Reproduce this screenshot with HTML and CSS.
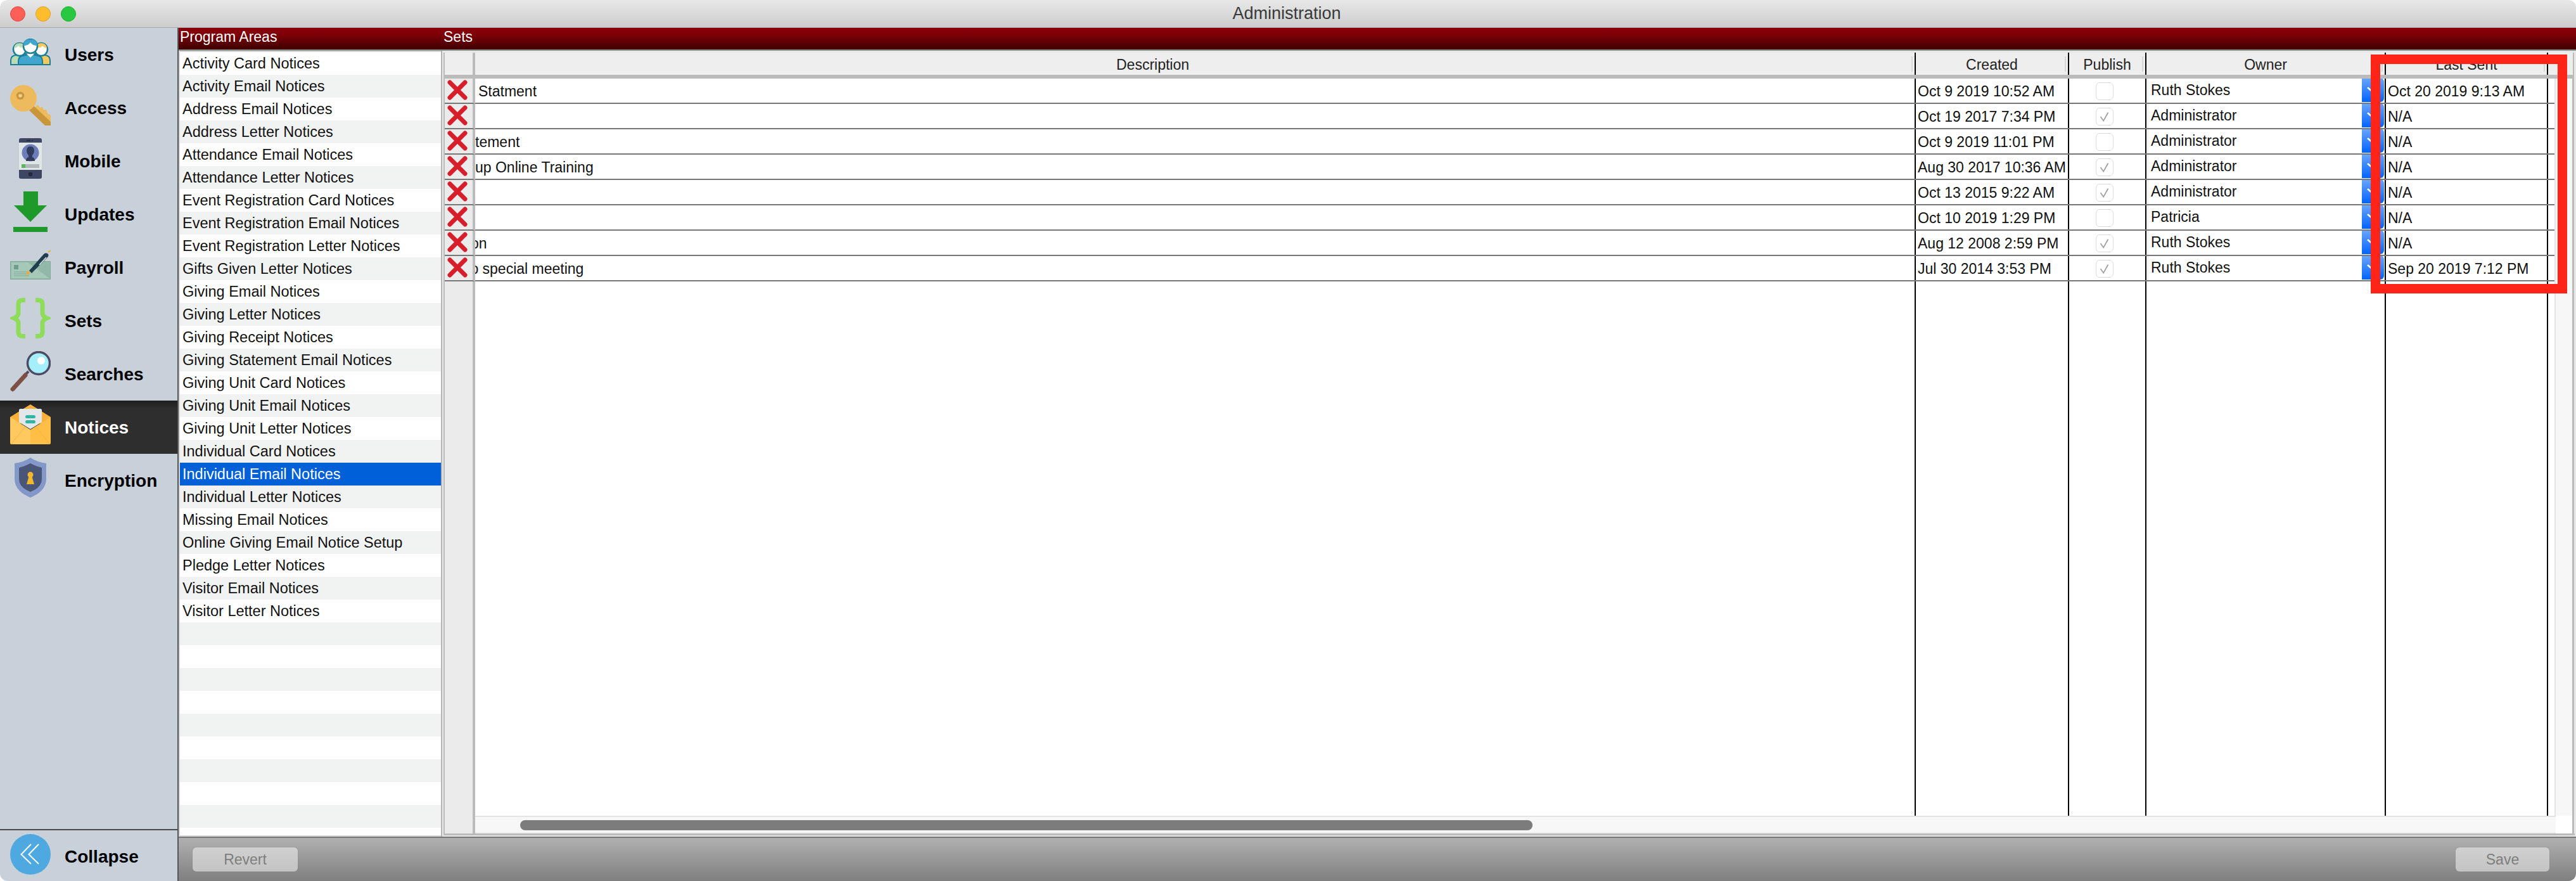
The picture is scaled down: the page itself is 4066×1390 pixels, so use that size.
FILE: index.html
```html
<!DOCTYPE html>
<html lang="en">
<head>
    <meta charset="UTF-8">
    <title>Administration</title>
    <link rel="stylesheet" href="styles.css">
</head>
<body>
    <div class="window">
        <div class="titlebar">
            <div class="lights">
                <span class="light red"></span>
                <span class="light yellow"></span>
                <span class="light green"></span>
            </div>
            <div class="title">Administration</div>
        </div>
        <div class="content">
            <div class="sidebar">
                <div class="nav">
                    <div class="nav-item">
                        <svg class="nav-icon" viewBox="0 0 64 64">
                            <path d="M1 52V45q0-7 8-8l7-2h18v17z" fill="#b9dcb4" stroke="#1a7f96" stroke-width="2"/>
                            <path d="M63 52V45q0-7-8-8l-7-2H30v17z" fill="#f6c95f" stroke="#1a7f96" stroke-width="2"/>
                            <circle cx="15" cy="28" r="10" fill="#fff" stroke="#1a7f96" stroke-width="2.5"/>
                            <path d="M6 26q1-8 9-8 7 0 9 7-9 1-11-3-2 3-7 4z" fill="#b9dcb4"/>
                            <circle cx="49" cy="28" r="10" fill="#fff" stroke="#1a7f96" stroke-width="2.5"/>
                            <path d="M58 26q-1-8-9-8-7 0-9 7 9 1 11-3 2 3 7 4z" fill="#f6c95f"/>
                            <path d="M13 52V46q0-7 7-8l12-3 12 3q7 1 7 8v6z" fill="#41a5d0" stroke="#1a7f96" stroke-width="2"/>
                            <path d="M26 35l6 6 6-6-6-3z" fill="#fff"/>
                            <circle cx="32" cy="23" r="11" fill="#fff" stroke="#1a7f96" stroke-width="2.5"/>
                            <path d="M21 22q0-10 11-10t11 10q-8 0-11-5-3 5-11 5z" fill="#41a5d0"/>
                        </svg>
                        <span class="nav-label">Users</span>
                    </div>
                    <div class="nav-item">
                        <svg class="nav-icon" viewBox="0 0 64 64">
                            <path d="M36 36l8-4 3 4 4-1 2 5 4-1 2 6 5 3v16H58z" fill="#edbb5e"/>
                            <path d="M30 40l7-7 27 25v6H55z" fill="#c9973a"/>
                            <path d="M41 31l3 1 3 4 4-1 2 5 4-1 2 6 5 3v10z" fill="#edbb5e"/>
                            <circle cx="21" cy="21" r="21" fill="#edbb5e"/>
                            <circle cx="16" cy="17" r="4.5" fill="#edd29a" stroke="#c9973a" stroke-width="3.5"/>
                        </svg>
                        <span class="nav-label">Access</span>
                    </div>
                    <div class="nav-item">
                        <svg class="nav-icon" viewBox="0 0 64 64">
                            <rect x="14" y="0" width="36" height="64" rx="3" fill="#3d4663"/>
                            <rect x="14" y="7" width="36" height="43" fill="#e0e6e8"/>
                            <rect x="26" y="3" width="6" height="1.5" fill="#22293d"/>
                            <circle cx="35" cy="3.8" r="1" fill="#22293d"/>
                            <circle cx="32" cy="23" r="13.5" fill="#6d7db8"/>
                            <path d="M25 36q0-5 4-6v-3q-3-3-3-7 0-7 6-7t6 7q0 4-3 7v3q4 1 4 6-3 0-7 0t-7 0z" fill="#2f3a5c"/>
                            <rect x="18" y="41" width="28" height="6" fill="#b0b8bc"/>
                            <rect x="18" y="41" width="6" height="6" fill="#5cb85c"/>
                            <circle cx="32" cy="57" r="3.2" fill="#22293d"/>
                        </svg>
                        <span class="nav-label">Mobile</span>
                    </div>
                    <div class="nav-item">
                        <svg class="nav-icon" viewBox="0 0 64 64">
                            <path d="M21 0h23v22h14L32 48 6 22h15z" fill="#1f9a2a"/>
                            <rect x="5" y="56" width="54" height="8" fill="#1f9a2a"/>
                        </svg>
                        <span class="nav-label">Updates</span>
                    </div>
                    <div class="nav-item">
                        <svg class="nav-icon" viewBox="0 0 64 64">
                            <rect x="0.5" y="26.5" width="63" height="28" fill="#92b9a8" stroke="#7fab98"/>
                            <path d="M2 28h26l34 25H2z" fill="#a6c8b7"/>
                            <rect x="6" y="32" width="7" height="7" fill="#6f9d8c"/>
                            <path d="M6 43h20M6 46h24M6 49h24" stroke="#7fab98" stroke-width="1.2"/>
                            <path d="M25 48l2-7 5 4z" fill="#f0a830"/>
                            <path d="M30 41L53 15q3-3 6-1t0 6L34 45z" fill="#1f3f4f"/>
                            <path d="M46 32l11-12" stroke="#dfe6e8" stroke-width="1.6"/>
                            <path d="M60 12l4-3" stroke="#f0a830" stroke-width="2"/>
                        </svg>
                        <span class="nav-label">Payroll</span>
                    </div>
                    <div class="nav-item">
                        <svg class="nav-icon" viewBox="0 0 64 64">
                            <path d="M24 3.5h-5q-6 0-6 7V24q0 5-7 8 7 3 7 8v13.5q0 7 6 7h5" fill="none" stroke="#8fdc5a" stroke-width="7"/>
                            <path d="M40 3.5h5q6 0 6 7V24q0 5 7 8-7 3-7 8v13.5q0 7-6 7h-5" fill="none" stroke="#8fdc5a" stroke-width="7"/>
                        </svg>
                        <span class="nav-label">Sets</span>
                    </div>
                    <div class="nav-item">
                        <svg class="nav-icon" viewBox="0 0 64 64">
                            <path d="M24 37l5-5" stroke="#4d4a62" stroke-width="4"/>
                            <path d="M4 60l20-22" stroke="#7d4f45" stroke-width="7" stroke-linecap="round"/>
                            <circle cx="45" cy="19" r="17.5" fill="#a5effb" stroke="#4d4a62" stroke-width="3.5"/>
                            <circle cx="49" cy="15" r="6" fill="#fff"/>
                        </svg>
                        <span class="nav-label">Searches</span>
                    </div>
                    <div class="nav-item active">
                        <svg class="nav-icon" viewBox="0 0 64 64">
                            <path d="M0 20L32 0l32 20v10H0z" fill="#fbb03b"/>
                            <path d="M14 9q0-2 2-2h32q2 0 2 2v19L32 39 14 28z" fill="#e4e7ea"/>
                            <rect x="24" y="17" width="16" height="5" rx="2.5" fill="#2fb5a4"/>
                            <rect x="24" y="25" width="16" height="5" rx="2.5" fill="#2fb5a4"/>
                            <path d="M0 20l32 20v23H2q-2 0-2-2z" fill="#ffc95f"/>
                            <path d="M64 20L32 40v23h30q2 0 2-2z" fill="#ffbe45"/>
                            <path d="M2 62l22-27M62 62L40 35" stroke="#fbb03b" stroke-width="1.5" opacity=".5"/>
                        </svg>
                        <span class="nav-label">Notices</span>
                    </div>
                    <div class="nav-item">
                        <svg class="nav-icon" viewBox="0 0 64 64">
                            <path d="M32 0q10 7 25 9v24q0 20-25 30Q7 53 7 33V9q15-2 25-9z" fill="#8497c9"/>
                            <path d="M32 9q9 5 18 7v18q0 13-18 20-18-7-18-20V16q9-2 18-7z" fill="#4a5678"/>
                            <circle cx="32" cy="27" r="4.5" fill="#f2b92c"/>
                            <path d="M30 28h4l4 14H26z" fill="#f2b92c"/>
                        </svg>
                        <span class="nav-label">Encryption</span>
                    </div>
                </div>
                <div class="collapse">
                    <svg class="collapse-icon" viewBox="0 0 64 64">
                        <circle cx="32" cy="32" r="32" fill="#4da9e0"/>
                        <path d="M33 16L17.500 32 33 47M45 16L29.500 32 45 47" fill="none" stroke="#fff" stroke-width="2"/>
                    </svg>
                    <span class="nav-label">Collapse</span>
                </div>
            </div>
            <div class="main">
                <div class="section-bar">
                    <div class="section-areas">Program Areas</div>
                    <div class="section-sets">Sets</div>
                </div>
                <div class="panels">
                    <ul class="area-list">
                        <li>Activity Card Notices</li>
                        <li>Activity Email Notices</li>
                        <li>Address Email Notices</li>
                        <li>Address Letter Notices</li>
                        <li>Attendance Email Notices</li>
                        <li>Attendance Letter Notices</li>
                        <li>Event Registration Card Notices</li>
                        <li>Event Registration Email Notices</li>
                        <li>Event Registration Letter Notices</li>
                        <li>Gifts Given Letter Notices</li>
                        <li>Giving Email Notices</li>
                        <li>Giving Letter Notices</li>
                        <li>Giving Receipt Notices</li>
                        <li>Giving Statement Email Notices</li>
                        <li>Giving Unit Card Notices</li>
                        <li>Giving Unit Email Notices</li>
                        <li>Giving Unit Letter Notices</li>
                        <li>Individual Card Notices</li>
                        <li class="selected">Individual Email Notices</li>
                        <li>Individual Letter Notices</li>
                        <li>Missing Email Notices</li>
                        <li>Online Giving Email Notice Setup</li>
                        <li>Pledge Letter Notices</li>
                        <li>Visitor Email Notices</li>
                        <li>Visitor Letter Notices</li>
                    </ul>
                    <div class="sets-panel">
                        <div class="table-head">
                            <div class="th"></div>
                            <div class="th th-desc"><span class="tick">Description</span></div>
                            <div class="th"><span class="tick">Created</span></div>
                            <div class="th"><span class="tick">Publish</span></div>
                            <div class="th"><span class="tick">Owner</span></div>
                            <div class="th"><span class="tick">Last Sent</span></div>
                            <div class="th th-end"></div>
                        </div>
                        <div class="table-body">
                            <div class="rows">
                                <div class="row">
                                    <div class="cell del"><svg class="x" viewBox="0 0 32 32"><path d="M4 4l24 24M28 4L4 28"/></svg></div>
                                    <div class="cell desc"><span class="d-first">Statment</span></div>
                                    <div class="cell date">Oct 9 2019 10:52 AM</div>
                                    <div class="cell pub"><span class="check"></span></div>
                                    <div class="cell owner"><span class="owner-name">Ruth Stokes</span><span class="arrow"><svg viewBox="0 0 35 38"><path d="M9 15l8 7 8-7"/></svg></span></div>
                                    <div class="cell date">Oct 20 2019 9:13 AM</div>
                                </div>
                                <div class="row">
                                    <div class="cell del"><svg class="x" viewBox="0 0 32 32"><path d="M4 4l24 24M28 4L4 28"/></svg></div>
                                    <div class="cell desc"></div>
                                    <div class="cell date">Oct 19 2017 7:34 PM</div>
                                    <div class="cell pub"><span class="check"><svg viewBox="0 0 28 28"><path d="M7 14l5 7 8-14"/></svg></span></div>
                                    <div class="cell owner"><span class="owner-name">Administrator</span><span class="arrow"><svg viewBox="0 0 35 38"><path d="M9 15l8 7 8-7"/></svg></span></div>
                                    <div class="cell date">N/A</div>
                                </div>
                                <div class="row">
                                    <div class="cell del"><svg class="x" viewBox="0 0 32 32"><path d="M4 4l24 24M28 4L4 28"/></svg></div>
                                    <div class="cell desc">tement</div>
                                    <div class="cell date">Oct 9 2019 11:01 PM</div>
                                    <div class="cell pub"><span class="check"></span></div>
                                    <div class="cell owner"><span class="owner-name">Administrator</span><span class="arrow"><svg viewBox="0 0 35 38"><path d="M9 15l8 7 8-7"/></svg></span></div>
                                    <div class="cell date">N/A</div>
                                </div>
                                <div class="row">
                                    <div class="cell del"><svg class="x" viewBox="0 0 32 32"><path d="M4 4l24 24M28 4L4 28"/></svg></div>
                                    <div class="cell desc">up Online Training</div>
                                    <div class="cell date">Aug 30 2017 10:36 AM</div>
                                    <div class="cell pub"><span class="check"><svg viewBox="0 0 28 28"><path d="M7 14l5 7 8-14"/></svg></span></div>
                                    <div class="cell owner"><span class="owner-name">Administrator</span><span class="arrow"><svg viewBox="0 0 35 38"><path d="M9 15l8 7 8-7"/></svg></span></div>
                                    <div class="cell date">N/A</div>
                                </div>
                                <div class="row">
                                    <div class="cell del"><svg class="x" viewBox="0 0 32 32"><path d="M4 4l24 24M28 4L4 28"/></svg></div>
                                    <div class="cell desc"></div>
                                    <div class="cell date">Oct 13 2015 9:22 AM</div>
                                    <div class="cell pub"><span class="check"><svg viewBox="0 0 28 28"><path d="M7 14l5 7 8-14"/></svg></span></div>
                                    <div class="cell owner"><span class="owner-name">Administrator</span><span class="arrow"><svg viewBox="0 0 35 38"><path d="M9 15l8 7 8-7"/></svg></span></div>
                                    <div class="cell date">N/A</div>
                                </div>
                                <div class="row">
                                    <div class="cell del"><svg class="x" viewBox="0 0 32 32"><path d="M4 4l24 24M28 4L4 28"/></svg></div>
                                    <div class="cell desc"></div>
                                    <div class="cell date">Oct 10 2019 1:29 PM</div>
                                    <div class="cell pub"><span class="check"></span></div>
                                    <div class="cell owner"><span class="owner-name">Patricia</span><span class="arrow"><svg viewBox="0 0 35 38"><path d="M9 15l8 7 8-7"/></svg></span></div>
                                    <div class="cell date">N/A</div>
                                </div>
                                <div class="row">
                                    <div class="cell del"><svg class="x" viewBox="0 0 32 32"><path d="M4 4l24 24M28 4L4 28"/></svg></div>
                                    <div class="cell desc"><span class="d-cut-on">on</span></div>
                                    <div class="cell date">Aug 12 2008 2:59 PM</div>
                                    <div class="cell pub"><span class="check"><svg viewBox="0 0 28 28"><path d="M7 14l5 7 8-14"/></svg></span></div>
                                    <div class="cell owner"><span class="owner-name">Ruth Stokes</span><span class="arrow"><svg viewBox="0 0 35 38"><path d="M9 15l8 7 8-7"/></svg></span></div>
                                    <div class="cell date">N/A</div>
                                </div>
                                <div class="row">
                                    <div class="cell del"><svg class="x" viewBox="0 0 32 32"><path d="M4 4l24 24M28 4L4 28"/></svg></div>
                                    <div class="cell desc"><span class="d-cut-to">to special meeting</span></div>
                                    <div class="cell date">Jul 30 2014 3:53 PM</div>
                                    <div class="cell pub"><span class="check"><svg viewBox="0 0 28 28"><path d="M7 14l5 7 8-14"/></svg></span></div>
                                    <div class="cell owner"><span class="owner-name">Ruth Stokes</span><span class="arrow"><svg viewBox="0 0 35 38"><path d="M9 15l8 7 8-7"/></svg></span></div>
                                    <div class="cell date">Sep 20 2019 7:12 PM</div>
                                </div>
                                <div class="row filler">
                                    <div class="cell del"></div>
                                    <div class="cell"></div>
                                    <div class="cell"></div>
                                    <div class="cell"></div>
                                    <div class="cell"></div>
                                    <div class="cell"></div>
                                </div>
                            </div>
                            <div class="vscroll"></div>
                        </div>
                        <div class="hscroll">
                            <div class="del-foot"></div>
                            <div class="htrack"><div class="hthumb"></div></div>
                            <div class="corner"></div>
                        </div>
                    </div>
                </div>
                <div class="footer-bar">
                    <button class="btn btn-revert">Revert</button>
                    <button class="btn btn-save">Save</button>
                </div>
            </div>
        </div>
        <div class="red-box"></div>
    </div>
</body>
</html>
```

FILE: styles.css
```css
* {
    box-sizing: border-box;
}
body {
    margin: 0;
    background-color: #fff;
    font-family: "Liberation Sans", Arial, sans-serif;
    font-size: 23px;
    color: #111;
}
.window {
    position: relative;
    width: 4066px;
    height: 1390px;
    display: flex;
    flex-direction: column;
    border-radius: 12px;
    overflow: hidden;
}
.titlebar {
    position: relative;
    height: 44px;
    flex: none;
    display: flex;
    align-items: center;
    justify-content: center;
    background: linear-gradient(#e8e8e8, #cdcdcd);
    border-bottom: 1px solid #a6a6a6;
}
.lights {
    position: absolute;
    left: 16px;
    top: 10px;
    display: flex;
    gap: 16px;
}
.light {
    width: 24px;
    height: 24px;
    border-radius: 50%;
}
.light.red {
    background-color: #ff5f57;
    border: 1px solid #e2463f;
}
.light.yellow {
    background-color: #ffbd2e;
    border: 1px solid #dfa023;
}
.light.green {
    background-color: #28c940;
    border: 1px solid #1dad2b;
}
.title {
    font-size: 27px;
    color: #3a3a3a;
    margin-right: 4px;
}
.content {
    flex: 1;
    display: flex;
    min-height: 0;
}

/* left nav */
.sidebar {
    width: 282px;
    flex: none;
    display: flex;
    flex-direction: column;
    background-color: #c8d0da;
    border-right: 2px solid #555;
}
.nav {
    flex: 1;
}
.nav-item {
    height: 84px;
    display: flex;
    align-items: center;
    padding-left: 16px;
    gap: 22px;
}
.nav-icon {
    width: 64px;
    height: 64px;
    flex: none;
    margin-bottom: 8px;
}
.nav-label {
    font-size: 28px;
    font-weight: bold;
    color: #000;
    padding-top: 2px;
}
.nav-item.active {
    background: linear-gradient(#1f1f1f, #2e2e2e 14px);
}
.nav-item.active .nav-label {
    color: #fff;
}
.collapse {
    height: 82px;
    display: flex;
    align-items: center;
    padding-left: 16px;
    gap: 22px;
    border-top: 2px solid #4a4a4a;
}
.collapse .nav-label {
    padding-top: 4px;
}
.collapse-icon {
    width: 64px;
    height: 64px;
    flex: none;
    margin-bottom: 4px;
}

/* main */
.main {
    flex: 1;
    display: flex;
    flex-direction: column;
    min-width: 0;
}
.section-bar {
    height: 36px;
    flex: none;
    display: flex;
    background: linear-gradient(#8c0008, #7a0006 35%, #3f0002);
    border-bottom: 2px solid #8a8a8a;
    color: #fff;
    line-height: 29px;
}
.section-areas {
    width: 418px;
    padding-left: 2px;
}
.panels {
    flex: 1;
    min-height: 0;
    display: flex;
    background-color: #d5d5d5;
    padding-left: 2px;
    border-bottom: 2px solid #777;
}
.area-list {
    width: 412px;
    flex: none;
    list-style: none;
    margin: 2px 0 2px 0;
    padding: 0;
    overflow: hidden;
    background: repeating-linear-gradient(#fff 0, #fff 36px, #f1f3f2 36px, #f1f3f2 72px);
}
.area-list li {
    height: 36px;
    line-height: 36px;
    padding-left: 4px;
    font-size: 23.5px;
    color: #111;
}
.area-list li.selected {
    background-color: #0060d8;
    color: #fff;
}

/* sets table */
.sets-panel {
    flex: 1;
    min-width: 0;
    display: flex;
    flex-direction: column;
    padding: 3px 2px 2px 2px;
    border-left: 2px solid #b5b5b5;
    background-color: #e8e8e8;
}
.table-head,
.row {
    display: grid;
    grid-template-columns: 48px 2274px 242px 122px 378px 256px 10px;
}
.table-head {
    height: 41px;
    flex: none;
    grid-template-columns: 48px 2274px 242px 122px 378px 256px 1fr;
    border-left: 2px solid #bbb;
    border-right: 2px solid #bbb;
    border-bottom: 6px solid #bbb;
    background-color: #eee;
    margin-right: 1px;
}
.th {
    position: relative;
    display: flex;
    align-items: center;
    justify-content: center;
    padding-top: 3px;
    border-right: 2px solid #000;
    color: #222;
    font-size: 23px;
}
.th:first-child {
    border-right: 4px solid #bbb;
}
.th-end {
    border-right: none;
}
.th-desc {
    justify-content: flex-start;
    padding-left: 1012px;
}
.tick::after {
    content: "";
    position: absolute;
    right: 3px;
    top: 6px;
    bottom: 5px;
    width: 2px;
    background-color: #d8d8d8;
}
.table-body {
    flex: 1;
    min-height: 0;
    display: flex;
}
.rows {
    width: 3332px;
    flex: none;
    display: flex;
    flex-direction: column;
    background-color: #fff;
    border-left: 2px solid #bbb;
    margin-left: 0;
}
.row {
    height: 40px;
    flex: none;
    border-bottom: 2px solid #777;
}
.row.filler {
    flex: 1;
    border-bottom: none;
}
.cell {
    display: flex;
    align-items: center;
    min-width: 0;
    overflow: hidden;
    white-space: nowrap;
    border-right: 2px solid #000;
}
.cell.del {
    align-items: flex-start;
    justify-content: center;
    padding: 2px 4px 0 0;
    margin-bottom: -2px;
    background-color: #ebebeb;
    border-right: 4px solid #bbb;
    border-bottom: 2px solid #777;
}
.row.filler .cell.del {
    margin-bottom: 0;
    border-bottom: none;
}
.x {
    width: 32px;
    height: 32px;
    flex: none;
}
.x path {
    fill: none;
    stroke: #d71f2b;
    stroke-width: 7;
    stroke-linecap: round;
}
.desc {
    padding-top: 2px;
}
.d-first {
    margin-left: 5px;
}
.d-cut-on {
    margin-left: -7px;
}
.d-cut-to {
    margin-left: -14px;
}
.date {
    padding-left: 3px;
    padding-top: 2px;
}
.pub {
    justify-content: center;
    padding: 2px 8px 0 0;
}
.check {
    width: 28px;
    height: 28px;
    border: 1px solid #dcdcdc;
    border-radius: 6px;
    background-color: #fff;
    display: block;
}
.check svg {
    display: block;
    width: 26px;
    height: 26px;
}
.check path {
    fill: none;
    stroke: #a4a4a4;
    stroke-width: 2;
}
.owner {
    position: relative;
    padding-left: 6px;
    padding-bottom: 2px;
    box-shadow: inset 2px 0 0 #eee;
    margin-left: 1px;
}
.owner-name {
    flex: 1;
}
.arrow {
    width: 35px;
    height: 38px;
    margin: -2px 1px -2px 0;
    flex: none;
    border-radius: 0 6px 6px 0;
    background: linear-gradient(#6aa5fb, #0064ff);
}
.arrow svg {
    display: block;
    width: 35px;
    height: 38px;
}
.arrow path {
    fill: none;
    stroke: #fff;
    stroke-width: 2.5;
}
.vscroll {
    flex: 1;
    background-color: #f7f7f7;
    border-left: 2px solid #e4e4e4;
    border-right: 3px solid #bbb;
    margin-right: 1px;
}

/* horizontal scroller */
.hscroll {
    height: 31px;
    flex: none;
    display: flex;
    border-bottom: 3px solid #bbb;
}
.del-foot {
    width: 50px;
    flex: none;
    background-color: #ebebeb;
    border-left: 2px solid #bbb;
    border-right: 4px solid #bbb;
}
.htrack {
    width: 3284px;
    flex: none;
    background-color: #f7f7f7;
    border-top: 2px solid #e4e4e4;
    border-bottom: 2px solid #ececec;
    padding: 5px 0 0 71px;
}
.hthumb {
    width: 1598px;
    height: 16px;
    border-radius: 8px;
    background-color: #7c7c7c;
}
.corner {
    flex: 1;
    background-color: #fff;
    border-right: 3px solid #bbb;
    margin-right: 1px;
}

/* bottom bar */
.footer-bar {
    height: 68px;
    flex: none;
    display: flex;
    justify-content: space-between;
    padding: 15px 42px 0 22px;
    background: linear-gradient(#b0b0b0, #7f7f7f);
}
.btn {
    height: 38px;
    border: none;
    border-radius: 6px;
    background: linear-gradient(#d0d0d0, #c4c4c4);
    box-shadow: 0 0 1px #777;
    font-family: inherit;
    font-size: 23px;
    color: #7d7d7d;
}
.btn-revert {
    width: 166px;
}
.btn-save {
    width: 148px;
}

/* annotation drawn over the screenshot */
.red-box {
    position: absolute;
    left: 3742px;
    top: 86px;
    width: 310px;
    height: 377px;
    border: 15px solid #ff2418;
}
```
